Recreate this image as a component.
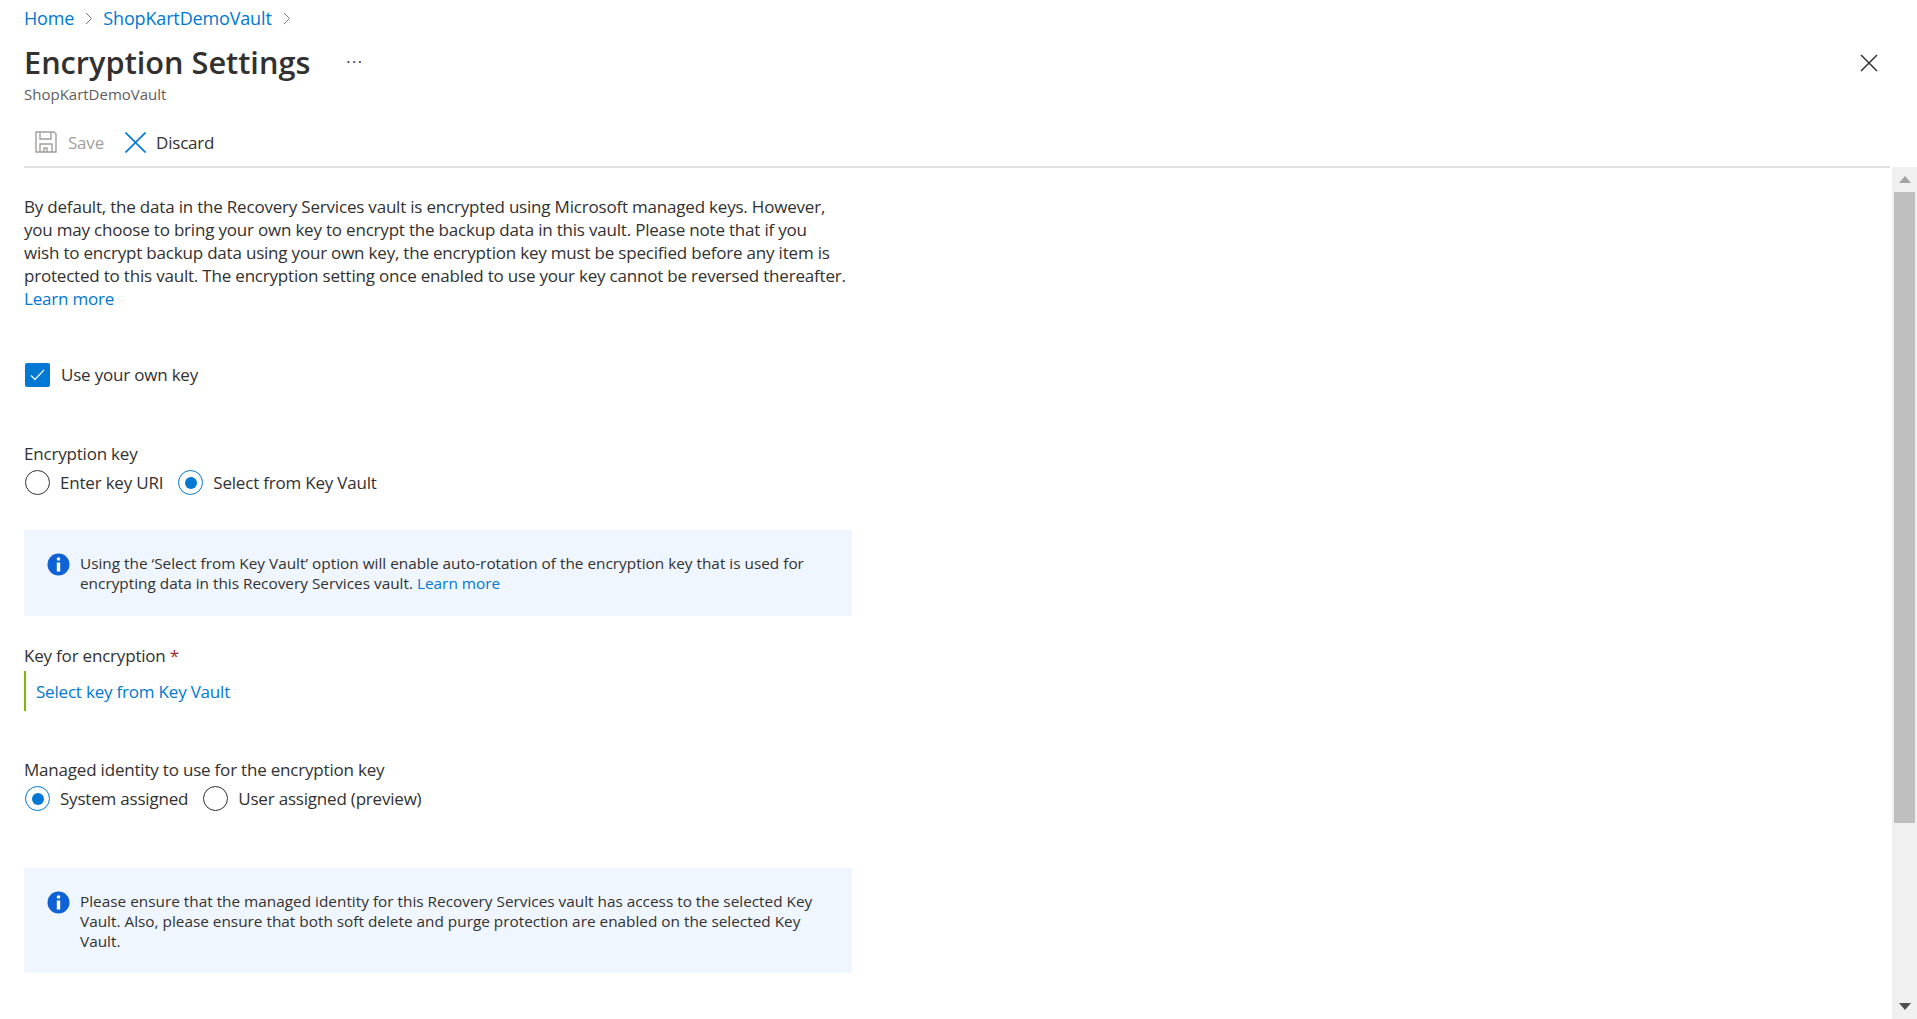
<style>
:global(body){margin:0;background:#fff;overflow:hidden}
.page{height:1019px;display:flex;flex-direction:column;font-family:"Open Sans","Noto Sans",sans-serif;font-size:15px;color:#323130;box-sizing:border-box}
a{color:#0078d4;text-decoration:none}
.crumbs{display:flex;align-items:center;height:36px;padding-left:24px;font-size:18px;letter-spacing:-.15px}
.crumbs svg{margin:0 11px;flex:none}
.titlerow{display:flex;align-items:center;height:44px;padding-left:24px;margin-top:4px}
h1{margin:0;font-size:30.7px;font-weight:600;letter-spacing:0;line-height:40px}
.more{margin-left:36px;font-size:16px;font-weight:400;line-height:1;letter-spacing:1.5px}
.close{margin-left:auto;margin-right:39px;display:flex;transform:translateY(1px)}
.sub{padding-left:24px;font-size:15px;color:#605e5c;line-height:18px;margin-top:1px}
.toolbar{display:flex;align-items:center;height:36px;margin:21px 27px 0 24px;border-bottom:2px solid #e0e0e0;padding:0 0 6px 0;font-size:17px;letter-spacing:-.2px}
.tool{display:flex;align-items:center;gap:11px}
.tool.save{margin-left:11px;color:#a19f9d;margin-right:21px}
.tool.discard{gap:10px}
.wrap{flex:1;display:flex;min-height:0}
.main{flex:1;padding:27px 0 0 24px;min-width:0;font-size:17px;letter-spacing:-.2px}
.intro{margin:0;width:828px;line-height:23px}
.check{display:flex;align-items:center;gap:11px;margin-top:52px;height:25px}
.box{width:25px;height:24px;background:#0078d4;border-radius:2px;display:flex;align-items:center;justify-content:center;margin-left:1px}
.lbl{line-height:23px}
.lbl1{margin-top:55px}
.radios{display:flex;align-items:center;height:25px;margin-top:5px;padding-left:1px}
.radio{display:flex;align-items:center;gap:10px;margin-right:15px}
.dot{width:25px;height:25px;box-sizing:border-box;border-radius:50%;border:1.5px solid #323130;display:flex;align-items:center;justify-content:center;flex:none}
.dot.on{border-color:#0078d4}
.dot.on::after{content:"";width:12px;height:12px;border-radius:50%;background:#0078d4}
.info{width:828px;box-sizing:border-box;background:#eff6ff;display:flex;gap:10px;padding:23px 30px 23px 23px;font-size:15.35px;letter-spacing:0;line-height:20px}
.info svg{flex:none}
.i1{margin-top:35px;height:86px}
.i2{margin-top:57px;height:105px}
.lbl2{margin-top:28px}
.req{color:#a4262c}
.keyfield{margin-top:4px;height:40px;border-left:2px solid #7fba00;padding-left:10px;display:flex;align-items:center}
.lbl3{margin-top:47px}
.sbar{width:25px;background:#f0f0f0;display:flex;flex-direction:column;align-items:center;margin-top:-1px}
.arrow{height:25px;display:flex;align-items:center;justify-content:center;flex:none}
.thumb{width:21px;height:631px;background:#bfbfbf;flex:none}
.fill{flex:1}
</style>

<div class="page">
  <nav class="crumbs">
    <a href="#h">Home</a>
    <svg width="7" height="13" viewBox="0 0 7 13"><path d="M1 1l5.5 5.5L1 12" fill="none" stroke="#797775" stroke-width="1"/></svg>
    <a href="#v">ShopKartDemoVault</a>
    <svg width="7" height="13" viewBox="0 0 7 13"><path d="M1 1l5.5 5.5L1 12" fill="none" stroke="#797775" stroke-width="1"/></svg>
  </nav>
  <div class="titlerow">
    <h1>Encryption Settings</h1>
    <span class="more">···</span>
    <span class="close"><svg width="18" height="18" viewBox="0 0 18 18"><path d="M1 1l16 16M17 1L1 17" stroke="#323130" stroke-width="1.5" fill="none"/></svg></span>
  </div>
  <div class="sub">ShopKartDemoVault</div>
  <div class="toolbar">
    <div class="tool save">
      <svg width="22" height="22" viewBox="0 0 22 22"><path d="M1 1h18l2 2v18H1zM5 1v7h11V1M5 21v-8h12v8M9 21v-4h3v4" fill="none" stroke="#a19f9d" stroke-width="1.4"/></svg>
      <span>Save</span>
    </div>
    <div class="tool discard">
      <svg width="21" height="21" viewBox="0 0 21 21"><path d="M.5.5l20 20M20.5.5l-20 20" stroke="#0078d4" stroke-width="1.6" fill="none"/></svg>
      <span>Discard</span>
    </div>
  </div>
  <div class="wrap">
    <main class="main">
      <p class="intro">By default, the data in the Recovery Services vault is encrypted using Microsoft managed keys. However, you may choose to bring your own key to encrypt the backup data in this vault. Please note that if you wish&nbsp;to encrypt backup data using your own key, the encryption key must be specified before any item is protected to this vault. The encryption setting once enabled to use your key cannot be reversed thereafter. <a href="#l">Learn more</a></p>
      <div class="check">
        <span class="box"><svg width="15" height="12" viewBox="0 0 15 12"><path d="M1 6.5L5 10.5 14 1" fill="none" stroke="#fff" stroke-width="1.2"/></svg></span>
        <span>Use your own key</span>
      </div>
      <div class="lbl lbl1">Encryption key</div>
      <div class="radios">
        <label class="radio"><span class="dot"></span>Enter key URI</label>
        <label class="radio"><span class="dot on"></span>Select from Key Vault</label>
      </div>
      <div class="info i1">
        <svg width="23" height="23" viewBox="0 0 23 23"><circle cx="11.5" cy="11.5" r="11" fill="#0f62d6"/><circle cx="11.5" cy="6" r="1.8" fill="#fff"/><rect x="9.8" y="9.5" width="3.4" height="9" fill="#fff"/></svg>
        <div>Using the ‘Select from Key Vault’ option will enable auto-rotation of the encryption key that is used for encrypting data in this Recovery Services vault. <a href="#m">Learn more</a></div>
      </div>
      <div class="lbl lbl2">Key for encryption <span class="req">*</span></div>
      <div class="keyfield"><a href="#s">Select key from Key Vault</a></div>
      <div class="lbl lbl3">Managed identity to use for the encryption key</div>
      <div class="radios">
        <label class="radio"><span class="dot on"></span>System assigned</label>
        <label class="radio"><span class="dot"></span>User assigned (preview)</label>
      </div>
      <div class="info i2">
        <svg width="23" height="23" viewBox="0 0 23 23"><circle cx="11.5" cy="11.5" r="11" fill="#0f62d6"/><circle cx="11.5" cy="6" r="1.8" fill="#fff"/><rect x="9.8" y="9.5" width="3.4" height="9" fill="#fff"/></svg>
        <div>Please ensure that the managed identity for this Recovery Services vault has access to the selected Key Vault. Also, please ensure that both soft delete and purge protection are enabled on the selected Key Vault.</div>
      </div>
    </main>
    <div class="sbar">
      <div class="arrow"><svg width="12" height="7" viewBox="0 0 12 7"><path d="M6 0l6 7H0z" fill="#a3a3a3"/></svg></div>
      <div class="thumb"></div>
      <div class="fill"></div>
      <div class="arrow"><svg width="12" height="7" viewBox="0 0 12 7"><path d="M0 0h12L6 7z" fill="#505050"/></svg></div>
    </div>
  </div>
</div>
